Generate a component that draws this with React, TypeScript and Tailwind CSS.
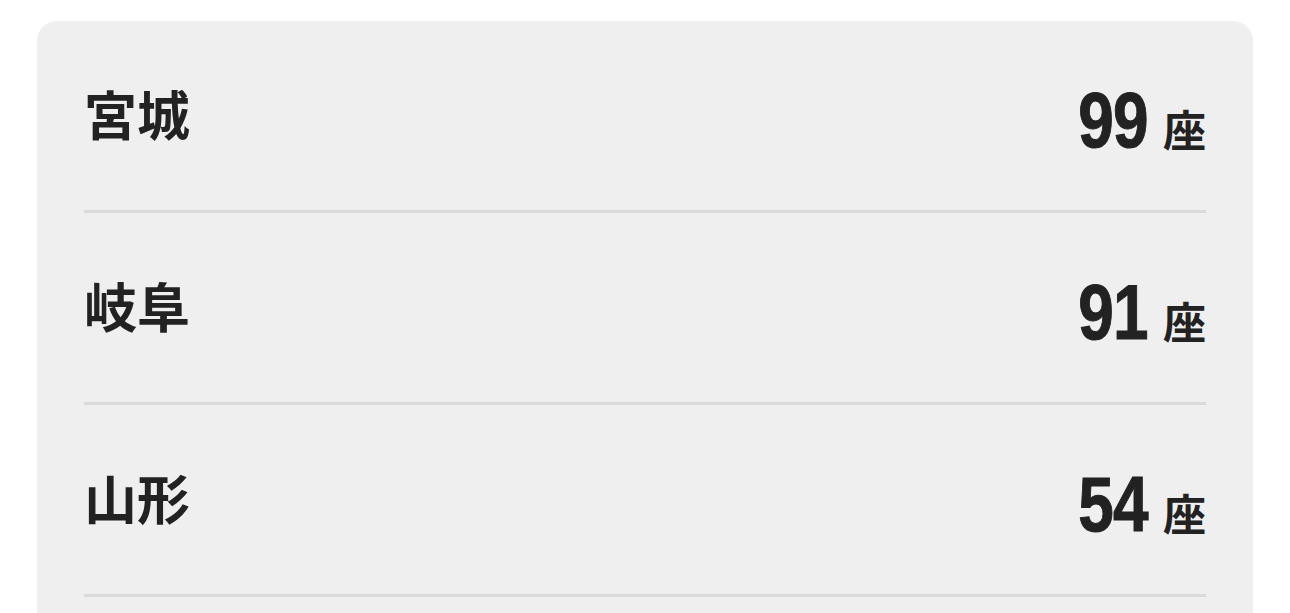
import React from "react";

const rows = [
  { name: "宮城", count: 99 },
  { name: "岐阜", count: 91 },
  { name: "山形", count: 54 },
];

const App = () => {
  return (
    <div className="min-h-screen bg-white pt-[21px] px-[37px]">
      <div className="rounded-[20px] bg-[#efefef] px-[47px] pb-[40px]">
        {rows.map((r) => (
          <div
            key={r.name}
            className="h-[192px] flex items-center justify-between border-b-[3px] border-[#dadada] text-[#222]"
          >
            <span className="text-[53px] font-bold leading-none font-['Noto_Sans_CJK_JP',sans-serif] -mt-[4px]">
              {r.name}
            </span>
            <span className="flex items-baseline gap-[15px] mt-[9px]">
              <span className="inline-block origin-right scale-x-[0.83] text-[77px] font-bold leading-none tracking-[-1px] [-webkit-text-stroke:1px_#222] font-['Liberation_Sans',Arial,sans-serif]">
                {r.count}
              </span>
              <span className="text-[43px] font-bold leading-none font-['Noto_Sans_CJK_JP',sans-serif]">
                座
              </span>
            </span>
          </div>
        ))}
      </div>
    </div>
  );
};

export default App;
